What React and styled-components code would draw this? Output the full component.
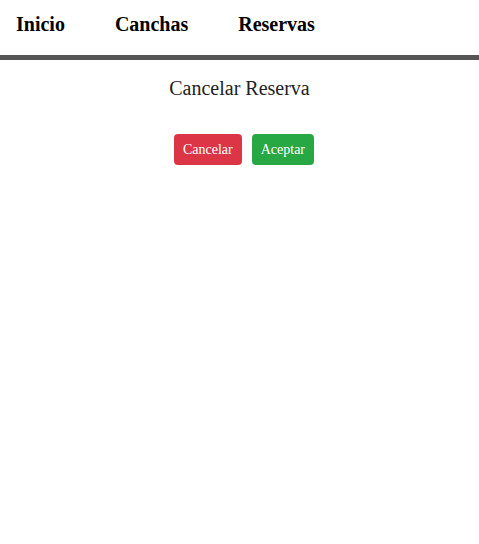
import React from "react";
import styled, { createGlobalStyle } from "styled-components";

const Global = createGlobalStyle`
  body {
    margin: 0;
    background: #fff;
    font-family: "Liberation Serif", "Times New Roman", serif;
  }
`;

const Nav = styled.nav`
  box-sizing: border-box;
  display: flex;
  align-items: flex-start;
  gap: 50px;
  height: 60px;
  padding: 13px 16px 0;
  border-bottom: 5px solid #555;
`;

const NavLink = styled.a`
  font-size: 20px;
  line-height: 23px;
  font-weight: bold;
  color: #000;
  text-decoration: none;
  cursor: pointer;
`;

const Content = styled.main`
  display: flex;
  flex-direction: column;
  align-items: center;
  padding-top: 17px;
`;

const Title = styled.h2`
  margin: 0;
  font-size: 20px;
  font-weight: normal;
  color: #222;
`;

const Actions = styled.div`
  display: flex;
  gap: 10px;
  margin-top: 34px;
  padding-left: 9px;
`;

const Button = styled.button`
  height: 31px;
  padding: 0 9px;
  border: none;
  border-radius: 4px;
  font-family: inherit;
  font-size: 14px;
  color: #fff;
  background: ${(p) => (p.$variant === "danger" ? "#dc3545" : "#28a745")};
  cursor: pointer;
`;

function App() {
  return (
    <>
      <Global />
      <Nav>
        <NavLink>Inicio</NavLink>
        <NavLink>Canchas</NavLink>
        <NavLink>Reservas</NavLink>
      </Nav>
      <Content>
        <Title>Cancelar Reserva</Title>
        <Actions>
          <Button $variant="danger">Cancelar</Button>
          <Button $variant="success">Aceptar</Button>
        </Actions>
      </Content>
    </>
  );
}

export default App;
